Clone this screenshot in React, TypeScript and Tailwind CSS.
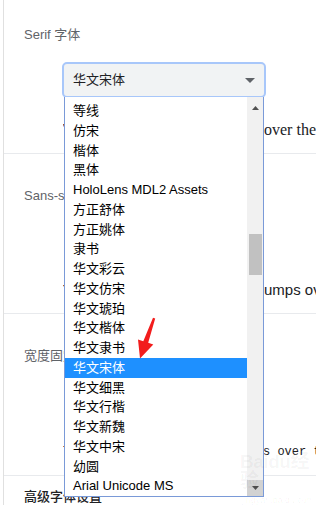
import React from "react";

const items = [
  "等线",
  "仿宋",
  "楷体",
  "黑体",
  "HoloLens MDL2 Assets",
  "方正舒体",
  "方正姚体",
  "隶书",
  "华文彩云",
  "华文仿宋",
  "华文琥珀",
  "华文楷体",
  "华文隶书",
  "华文宋体",
  "华文细黑",
  "华文行楷",
  "华文新魏",
  "华文中宋",
  "幼圆",
  "Arial Unicode MS",
];

export default function App() {
  return (
    <div className="relative w-[316px] h-[505px] overflow-hidden bg-white font-['Liberation_Sans','Noto_Sans_CJK_SC',sans-serif]">
      <div className="ml-[3px] h-full border-l border-[#e0e0e0]">
        {/* Serif */}
        <section className="h-[154px] border-b border-[#e8eaed] pl-5 pt-[27px]">
          <div className="text-[13px] leading-4 text-[#5f6368]">Serif 字体</div>
          <div className="relative z-10 mt-[19px] ml-[38px] flex h-[36px] w-[204px] items-center justify-between rounded-[5px] border-2 border-[#a8c7fa] bg-[#f1f3f4] pl-[9px] pr-[8px]">
            <span className="text-[13px] text-[#202124]">华文宋体</span>
            <svg width="10" height="5" viewBox="0 0 10 5" className="mr-[1px]">
              <polygon points="0,0 10,0 5,5" fill="#5f6368" />
            </svg>
          </div>
          <p className="mt-[22px] ml-[39px] whitespace-nowrap text-[16px] leading-5 text-[#202124] font-['Liberation_Serif','Noto_Sans_CJK_SC',serif]">
            <span className="inline-block w-[201px] overflow-hidden align-top">The quick brown fox jumps </span>
            <span>over the lazy dog</span>
          </p>
        </section>

        {/* Sans-serif */}
        <section className="h-[160px] border-b border-[#e8eaed] pl-5 pt-[34px]">
          <div className="text-[13px] leading-4 text-[#5f6368]">Sans-serif 字体</div>
          <p className="mt-[76px] ml-[39px] whitespace-nowrap text-[15px] leading-5 text-[#202124]">
            <span className="inline-block w-[201px] overflow-hidden align-top">The quick brown fox j</span>
            <span>umps over the lazy dog</span>
          </p>
        </section>

        {/* Fixed width */}
        <section className="h-[162px] border-b border-[#e8eaed] pl-5 pt-[34px]">
          <div className="text-[13px] leading-4 text-[#5f6368]">宽度固定字体</div>
          <p className="mt-[78px] ml-[39px] whitespace-nowrap text-[12px] leading-5 text-[#202124] font-['Liberation_Mono',monospace]">
            <span className="inline-block w-[200px] overflow-hidden align-top">The quick brown fox jump</span>
            <span>s over the lazy dog</span>
          </p>
        </section>

        {/* Advanced */}
        <section className="pl-5 pt-[13px]">
          <div className="text-[13px] leading-4 font-medium text-[#202124]">高级字体设置</div>
        </section>
      </div>

      {/* Open dropdown list */}
      <div className="absolute left-[64px] top-[97px] z-20 flex h-[400px] w-[200px] border border-t-0 border-[#7a9ad8] bg-white">
        <ul className="flex-1 pt-[4px] text-[13px] text-black">
          {items.map((it) => (
            <li
              key={it}
              className={
                it === "华文宋体"
                  ? "flex h-[19.75px] items-center bg-[#1e90ff] pl-[8px] text-white"
                  : "flex h-[19.75px] items-center pl-[8px]"
              }
            >
              {it}
            </li>
          ))}
        </ul>
        <div className="flex w-[16px] flex-col bg-[#f1f1f1]">
          <div className="flex h-[18px] items-center justify-center pt-[3px]">
            <svg width="7" height="4" viewBox="0 0 7 4">
              <polygon points="0,4 7,4 3.5,0" fill="#505050" />
            </svg>
          </div>
          <div className="h-[119px]" />
          <div className="mx-auto h-[41px] w-[13px] bg-[#c1c1c1]" />
          <div className="flex-1" />
          <div className="flex h-[16px] items-center justify-center bg-[#d2d2d2]">
            <svg width="7" height="4" viewBox="0 0 7 4">
              <polygon points="0,0 7,0 3.5,4" fill="#505050" />
            </svg>
          </div>
        </div>
      </div>

      {/* Red annotation arrow */}
      <svg className="pointer-events-none absolute left-0 top-0 z-30" width="316" height="505" viewBox="0 0 316 505">
        <polygon
          points="153,317.7 155.2,318.5 148.2,342.8 153.3,344.6 140,358.5 138,339.4 143.3,341.2"
          fill="#f21d1d"
        />
      </svg>

      {/* Faint watermark */}
      <div className="pointer-events-none absolute left-[240px] top-[452px] z-30 flex flex-col items-center leading-none text-black/[0.045]">
        <span className="text-[19px] font-bold tracking-tight">Baidu经验</span>
        <span className="mt-[6px] text-[9px]">jingyan.baidu.com</span>
      </div>
    </div>
  );
}
